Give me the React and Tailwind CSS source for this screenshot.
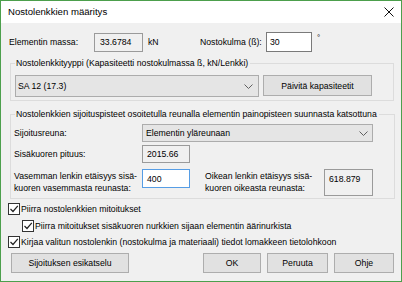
import React from "react";

const F = { fontFamily: '"Liberation Sans", Arial, sans-serif' };

function Chevron() {
  return (
    <svg width="9" height="5" viewBox="0 0 9 5" className="shrink-0">
      <path d="M0.5 0.5 L4.5 4.5 L8.5 0.5" fill="none" stroke="#606060" strokeWidth="1" />
    </svg>
  );
}

function Check({ checked = true }) {
  return (
    <span className="w-[12px] h-[12px] border border-[#333333] bg-white flex items-center justify-center shrink-0">
      {checked && (
        <svg width="10" height="10" viewBox="0 0 10 10">
          <path d="M1.5 5 L4 7.5 L8.8 1.8" fill="none" stroke="#222" strokeWidth="1.2" />
        </svg>
      )}
    </span>
  );
}

function Btn({ children, className = "" }) {
  return (
    <div className={"h-[20px] bg-[#e1e1e1] border border-[#adadad] flex items-center justify-center " + className}>
      {children}
    </div>
  );
}

export default function App() {
  return (
    <div
      style={F}
      className="w-[402px] h-[282px] border border-[#4c9f4c] bg-[#f0f0f0] flex flex-col text-[8.7px] text-black leading-[12px] overflow-hidden"
    >
      {/* title bar */}
      <div className="h-[22px] bg-white flex items-center justify-between pl-[7px] pr-[7px] shrink-0">
        <span className="text-[9.6px]">Nostolenkkien määritys</span>
        <svg width="10" height="10" viewBox="0 0 10 10">
          <path d="M0.5 0.5 L9.5 9.5 M9.5 0.5 L0.5 9.5" stroke="#111" strokeWidth="1" />
        </svg>
      </div>

      <div className="flex flex-col pl-[8px]">
        {/* row 1 */}
        <div className="flex items-center h-[20px] mt-[9px]">
          <span className="w-[85px]">Elementin massa:</span>
          <div className="w-[49px] h-[19px] border border-[#9a9a9a] flex items-center pl-[5px]">33.6784</div>
          <span className="ml-[5px] w-[52px]">kN</span>
          <span className="w-[66px]">Nostokulma (ß):</span>
          <div className="w-[46px] h-[20px] border border-[#7a7a7a] bg-white flex items-center pl-[3px]">30</div>
          <span className="ml-[5px] self-start text-[8px]">°</span>
        </div>

        {/* group 1 */}
        <fieldset className="mt-[5px] ml-[1px] w-[384px] border border-[#dcdcdc] px-[4px] pb-[3px]">
          <legend className="pl-[1px] pr-[2px] leading-[12px]">
            Nostolenkkityyppi (Kapasiteetti nostokulmassa ß, kN/Lenkki)
          </legend>
          <div className="flex mt-[6px] items-start">
            <div className="w-[244px] h-[22px] bg-[#e5e5e5] border border-[#acacac] flex items-center justify-between pl-[2px] pr-[5px]">
              <span>SA 12 (17.3)</span>
              <Chevron />
            </div>
            <Btn className="ml-[4px] w-[109px] h-[21px]">Päivitä kapasiteetit</Btn>
          </div>
        </fieldset>

        {/* group 2 */}
        <fieldset className="mt-[7px] ml-[1px] w-[385px] border border-[#dcdcdc] px-[3px] pb-[2px]">
          <legend className="ml-[1px] pl-[1px] pr-[2px] leading-[12px]">
            Nostolenkkien sijoituspisteet osoitetulla reunalla elementin painopisteen suunnasta katsottuna
          </legend>
          <div className="flex items-center mt-[4px] h-[18px]">
            <span className="w-[128px]">Sijoitusreuna:</span>
            <div className="w-[231px] h-[18px] bg-[#e5e5e5] border border-[#acacac] flex items-center justify-between pl-[3px] pr-[4px]">
              <span>Elementin yläreunaan</span>
              <Chevron />
            </div>
          </div>
          <div className="flex items-center mt-[3px] h-[18px]">
            <span className="w-[128px]">Sisäkuoren pituus:</span>
            <div className="w-[48px] h-[18px] border border-[#9a9a9a] flex items-center pl-[4px]">2015.66</div>
          </div>
          <div className="flex items-start mt-[6px]">
            <div className="w-[128px] mt-[1px]">
              <div>Vasemman lenkin etäisyys sisä-</div>
              <div>kuoren vasemmasta reunasta:</div>
            </div>
            <div className="w-[48px] h-[19px] border border-[#569de5] bg-white flex items-center pl-[4px]">400</div>
            <div className="ml-[15px] w-[119px] mt-[1px]">
              <div>Oikean lenkin etäisyys sisä-</div>
              <div>kuoren oikeasta reunasta:</div>
            </div>
            <div className="w-[49px] h-[27px] border border-[#9a9a9a] flex items-start pt-[3px] pl-[4px]">618.879</div>
          </div>
        </fieldset>

        {/* checkboxes */}
        <div className="flex items-center h-[13px] mt-[3px] -ml-[1px]">
          <Check />
          <span className="ml-[1px]">Piirra nostolenkkien mitoitukset</span>
        </div>
        <div className="flex items-center h-[13px] mt-[4px] ml-[13px]">
          <Check />
          <span className="ml-[1px]">Piirra mitoitukset sisäkuoren nurkkien sijaan elementin äärinurkista</span>
        </div>
        <div className="flex items-center h-[13px] mt-[3px] -ml-[1px]">
          <Check />
          <span className="ml-[1px]">Kirjaa valitun nostolenkin (nostokulma ja materiaali) tiedot lomakkeen tietolohkoon</span>
        </div>

        {/* buttons */}
        <div className="flex items-center mt-[5px] ml-[2px]">
          <Btn className="w-[118px]">Sijoituksen esikatselu</Btn>
          <Btn className="ml-[74px] w-[58px] border-[#0078d7]">OK</Btn>
          <Btn className="ml-[6px] w-[61px]">Peruuta</Btn>
          <Btn className="ml-[6px] w-[60px]">Ohje</Btn>
        </div>
      </div>
    </div>
  );
}
